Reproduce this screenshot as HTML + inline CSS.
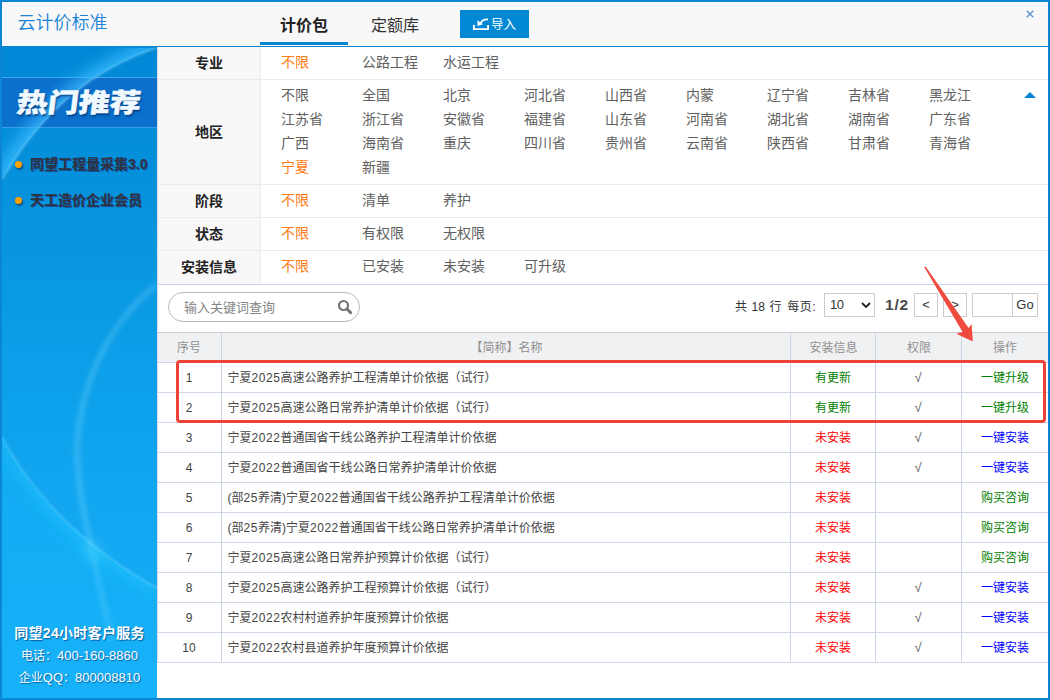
<!DOCTYPE html>
<html lang="zh-CN">
<head>
<meta charset="utf-8">
<title>云计价标准</title>
<style>
*{box-sizing:border-box;margin:0;padding:0}
html,body{width:1050px;height:700px;overflow:hidden;background:#fff}
body{font-family:"Liberation Sans","Noto Sans CJK SC",sans-serif;font-size:12px;color:#444;position:relative}
.abs{position:absolute}
#frame{position:absolute;left:0;top:0;width:1050px;height:700px;border:2px solid #0a86d4;border-top-width:2px;pointer-events:none;z-index:50}
#header{position:absolute;left:2px;top:2px;width:1046px;height:44px;background:#f8f8f9}
#hline{position:absolute;left:2px;top:46px;width:1046px;height:1px;background:#0a86d4}
#title{position:absolute;left:17.5px;top:9px;font-size:18px;line-height:28px;font-weight:350;color:#1a82d6;white-space:nowrap}
.tab{position:absolute;top:12px;font-size:16px;line-height:28px;white-space:nowrap;color:#333}
#tab1{left:280px;font-weight:700;color:#222}
#tab2{left:371px}
#tabline{position:absolute;left:260px;top:42px;width:88px;height:3px;background:#0a86d4}
#import{position:absolute;left:460px;top:10px;width:69px;height:28px;background:#0088d4;color:#fff;font-size:12.5px;line-height:28px;white-space:nowrap}
#import span{position:absolute;left:31px;top:1px}
#import svg{position:absolute;left:0;top:0}
#close{position:absolute;left:1026px;top:10px;width:8px;height:8px}
/* sidebar */
#side{position:absolute;left:2px;top:47px;width:155px;height:651px;background:linear-gradient(180deg,#0088d6 0%,#0894de 27%,#0c9ee8 47%,#12a6f0 67%,#17aef8 100%);overflow:hidden}
#banner{position:absolute;left:0;top:30px;width:155px;height:51px;background:#0a70cc;border-top:1px solid #3fa8ec;border-bottom:1px solid #2f9fe8}
#hot{position:absolute;left:15px;top:38px;font-size:26px;line-height:36px;font-weight:900;color:#f0f9ff;white-space:nowrap;transform-origin:0 50%;transform:scaleX(1.19) skewX(-6deg);-webkit-text-stroke:.5px #f0f9ff;text-shadow:1px 2px 2px rgba(0,40,100,.7)}
.sitem{position:absolute;left:28px;font-size:14px;font-weight:700;color:#30323f;line-height:20px;white-space:nowrap;text-shadow:1px 1px 0 rgba(20,40,120,.6)}
.dot{position:absolute;left:12.5px;width:7px;height:7px;border-radius:50%;background:#ffa200;box-shadow:1px 1.5px 2px rgba(0,30,80,.7)}
.svc{position:absolute;left:0;width:155px;text-align:center;color:#fff;white-space:nowrap;text-shadow:1px 1px 1px rgba(0,40,100,.6)}
/* filters */
.frow{position:absolute;left:157px;width:891px;border-bottom:1px solid #ebebeb;background:#fff}
.flabel{position:absolute;left:0;top:0;bottom:0;width:104px;padding-left:1px;background:#f8f8f8;border-right:1px solid #ebebeb;font-size:14px;font-weight:700;color:#222;text-align:center}
.fi{position:absolute;font-size:14px;line-height:24px;color:#606060;white-space:nowrap}
.fi.on{color:#ff7a12}
/* search */
#fbot{position:absolute;left:157px;top:284px;width:891px;height:1px;background:#c9d3e6}
#search{position:absolute;left:168px;top:292px;width:192px;height:30px;border:1px solid #b9b9b9;border-radius:15px;background:#fff}
#search span{position:absolute;left:15px;top:0;line-height:30px;font-size:13px;color:#858585;white-space:nowrap}
#search svg{position:absolute;left:168px;top:5.5px}
.pg{position:absolute;white-space:nowrap}
.pbtn{position:absolute;top:293px;height:24px;border:1px solid #ccc;background:#fff;text-align:center;line-height:22px;font-size:13px;color:#333}
/* table */
#thead{position:absolute;left:157px;top:332px;width:891px;height:31px;background:#f0f1f3;border-top:1px solid #c9cbd0;border-bottom:1px solid #d0d8e8}
.th{position:absolute;top:0;height:29px;line-height:31px;text-align:center;color:#909090;font-size:12px}
.vl{position:absolute;width:1px;background:#ccd4e6}
.tr{position:absolute;left:157px;width:891px;height:30px;border-bottom:1px solid #d0d8e8}
.td{position:absolute;top:0;height:29px;line-height:30px;font-size:12px;white-space:nowrap;color:#444}
.c1{left:0;width:64px;text-align:center}
.c2{left:70.5px}
.n{letter-spacing:.55px}
.c3{left:633.5px;width:85px;text-align:center}
.c4{left:718px;width:86px;text-align:center;color:#555;font-size:13px}
.c5{left:805px;width:86px;text-align:center}
.g{color:#008000}.r{color:#f00}.b{color:#00f}
#redbox{position:absolute;left:176px;top:360px;width:870px;height:63px;border:3px solid #ee4236;border-radius:4px}
</style>
</head>
<body>
<div id="header"></div>
<div id="hline"></div>
<div id="title">云计价标准</div>
<div class="tab" id="tab1">计价包</div>
<div class="tab" id="tab2">定额库</div>
<div id="tabline"></div>
<div id="import"><svg width="69" height="28" viewBox="0 0 69 28"><path d="M13.9 15V19.1H28.1V15" fill="none" stroke="#fff" stroke-width="1.9"/><path d="M28 9.3Q22.4 9 20.6 13.2" fill="none" stroke="#fff" stroke-width="1.8"/><path d="M17.4 10.3L23 14.3L17.5 16z" fill="#fff"/></svg><span>导入</span></div>
<svg id="close" viewBox="0 0 8 8"><path d="M0.7 0.7L7.3 7.3M7.3 0.7L0.7 7.3" stroke="#5b8fc9" stroke-width="1.3" fill="none"/></svg>

<div id="side">
  <div id="banner"></div>
  <svg class="abs" style="left:0;top:0" width="155" height="651" viewBox="2 47 155 651">
    <defs>
      <filter id="b6" x="-50%" y="-50%" width="200%" height="200%"><feGaussianBlur stdDeviation="7"/></filter>
      <filter id="b1" x="-50%" y="-50%" width="200%" height="200%"><feGaussianBlur stdDeviation="0.8"/></filter>
      <filter id="b2" x="-50%" y="-50%" width="200%" height="200%"><feGaussianBlur stdDeviation="2"/></filter>
      <filter id="b3" x="-50%" y="-50%" width="200%" height="200%"><feGaussianBlur stdDeviation="5"/></filter>
      <clipPath id="c1"><path d="M157 48Q60 80 2 180V47z"/></clipPath>
      <clipPath id="c2"><path d="M2 437C30 490 80 545 157 588V698H2z"/></clipPath>
    </defs>
    <g clip-path="url(#c1)"><path d="M157 48Q60 80 2 180" fill="none" stroke="#38bcff" stroke-opacity=".75" stroke-width="20" filter="url(#b6)"/></g>
    <path d="M157 48Q60 80 2 180" fill="none" stroke="#c8f0ff" stroke-opacity=".35" stroke-width="1.4" filter="url(#b1)"/>
    <path d="M157 284C100 330 78 400 77 450C78 500 90 540 112 640" fill="none" stroke="#7fdcff" stroke-opacity=".28" stroke-width="6" filter="url(#b2)"/>
    <g clip-path="url(#c2)"><path d="M2 437C30 490 80 545 157 588V698H2z" fill="#18c0ff" opacity=".22"/><path d="M2 437C30 490 80 545 157 588" fill="none" stroke="#20d0ff" stroke-opacity=".28" stroke-width="20" filter="url(#b6)"/></g>
    <path d="M2 437C30 490 80 545 157 588" fill="none" stroke="#b0f0ff" stroke-opacity=".35" stroke-width="1.6" filter="url(#b1)"/>
    <circle cx="93" cy="552" r="12" fill="#60e0ff" opacity=".22" filter="url(#b3)"/>
  </svg>
  <div id="hot">热门推荐</div>
  <div class="dot" style="top:114px"></div><div class="sitem" style="top:107px">同望工程量采集3.0</div>
  <div class="dot" style="top:150px"></div><div class="sitem" style="top:143px">天工造价企业会员</div>
  <div class="svc" style="top:575px;font-size:14px;font-weight:700;line-height:22px;letter-spacing:.3px">同望24小时客户服务</div>
  <div class="svc" style="top:599px;font-size:13px;line-height:20px"><span style="font-size:12px">电话：</span>400-160-8860</div>
  <div class="svc" style="top:621px;font-size:13px;line-height:20px"><span style="font-size:12px">企业</span>QQ<span style="font-size:12px">：</span>800008810</div>
</div>

<!-- filters -->
<div class="frow" style="top:47px;height:33px"><div class="flabel" style="line-height:32px">专业</div>
  <span class="fi on" style="left:124px;top:3px">不限</span><span class="fi" style="left:205px;top:3px">公路工程</span><span class="fi" style="left:286px;top:3px">水运工程</span></div>
<div class="frow" style="top:80px;height:105px"><div class="flabel" style="line-height:104px">地区</div>
  <span class="fi" style="left:124px;top:3px">不限</span><span class="fi" style="left:205px;top:3px">全国</span><span class="fi" style="left:286px;top:3px">北京</span><span class="fi" style="left:367px;top:3px">河北省</span><span class="fi" style="left:448px;top:3px">山西省</span><span class="fi" style="left:529px;top:3px">内蒙</span><span class="fi" style="left:610px;top:3px">辽宁省</span><span class="fi" style="left:691px;top:3px">吉林省</span><span class="fi" style="left:772px;top:3px">黑龙江</span>
  <span class="fi" style="left:124px;top:27px">江苏省</span><span class="fi" style="left:205px;top:27px">浙江省</span><span class="fi" style="left:286px;top:27px">安徽省</span><span class="fi" style="left:367px;top:27px">福建省</span><span class="fi" style="left:448px;top:27px">山东省</span><span class="fi" style="left:529px;top:27px">河南省</span><span class="fi" style="left:610px;top:27px">湖北省</span><span class="fi" style="left:691px;top:27px">湖南省</span><span class="fi" style="left:772px;top:27px">广东省</span>
  <span class="fi" style="left:124px;top:51px">广西</span><span class="fi" style="left:205px;top:51px">海南省</span><span class="fi" style="left:286px;top:51px">重庆</span><span class="fi" style="left:367px;top:51px">四川省</span><span class="fi" style="left:448px;top:51px">贵州省</span><span class="fi" style="left:529px;top:51px">云南省</span><span class="fi" style="left:610px;top:51px">陕西省</span><span class="fi" style="left:691px;top:51px">甘肃省</span><span class="fi" style="left:772px;top:51px">青海省</span>
  <span class="fi on" style="left:124px;top:75px">宁夏</span><span class="fi" style="left:205px;top:75px">新疆</span>
  <svg class="abs" style="left:867px;top:12px" width="12" height="6" viewBox="0 0 12 6"><path d="M0 6L6 0L12 6z" fill="#0a86d4"/></svg>
</div>
<div class="frow" style="top:185px;height:33px"><div class="flabel" style="line-height:32px">阶段</div>
  <span class="fi on" style="left:124px;top:3px">不限</span><span class="fi" style="left:205px;top:3px">清单</span><span class="fi" style="left:286px;top:3px">养护</span></div>
<div class="frow" style="top:218px;height:33px"><div class="flabel" style="line-height:32px">状态</div>
  <span class="fi on" style="left:124px;top:3px">不限</span><span class="fi" style="left:205px;top:3px">有权限</span><span class="fi" style="left:286px;top:3px">无权限</span></div>
<div class="frow" style="top:251px;height:33px;border-bottom:none"><div class="flabel" style="line-height:32px">安装信息</div>
  <span class="fi on" style="left:124px;top:3px">不限</span><span class="fi" style="left:205px;top:3px">已安装</span><span class="fi" style="left:286px;top:3px">未安装</span><span class="fi" style="left:367px;top:3px">可升级</span></div>
<div id="fbot"></div>

<!-- search + pager -->
<div id="search"><span>输入关键词查询</span><svg width="16" height="16" viewBox="0 0 16 16"><circle cx="6.5" cy="6.5" r="4.5" fill="none" stroke="#737373" stroke-width="2.2"/><path d="M10.2 10.2L13.6 13.6" stroke="#737373" stroke-width="3" stroke-linecap="round"/></svg></div>
<div class="pg" style="left:735px;top:297px;font-size:12px;line-height:20px;color:#333;word-spacing:1px;letter-spacing:.1px">共 18 行<span style="margin-left:5.5px;letter-spacing:.6px">每页:</span></div>
<div class="pbtn" style="left:824px;width:51px;text-align:left;padding-left:5px;font-size:13px;letter-spacing:-.6px">10<svg class="abs" style="left:36px;top:8px" width="10" height="7" viewBox="0 0 10 7"><path d="M1 1L5 5L9 1" fill="none" stroke="#222" stroke-width="1.8"/></svg></div>
<div class="pg" style="left:885px;top:295px;font-size:15.5px;font-weight:700;line-height:20px;color:#4a4a4a;letter-spacing:.8px">1/2</div>
<div class="pbtn" style="left:914px;width:24px">&lt;</div>
<div class="pbtn" style="left:943px;width:24px">&gt;</div>
<div class="pbtn" style="left:972px;width:41px"></div>
<div class="pbtn" style="left:1012px;width:26px">Go</div>

<!-- table -->
<div id="thead">
  <div class="th" style="left:0;width:64px">序号</div>
  <div class="th" style="left:65px;width:569px">【简称】名称</div>
  <div class="th" style="left:634px;width:85px">安装信息</div>
  <div class="th" style="left:719px;width:86px">权限</div>
  <div class="th" style="left:805px;width:86px">操作</div>
</div>
<div class="tr" style="top:363px"><div class="td c1">1</div><div class="td c2">宁夏<span class="n">2025</span>高速公路养护工程清单计价依据（试行）</div><div class="td c3 g">有更新</div><div class="td c4">√</div><div class="td c5 g">一键升级</div></div>
<div class="tr" style="top:393px"><div class="td c1">2</div><div class="td c2">宁夏<span class="n">2025</span>高速公路日常养护清单计价依据（试行）</div><div class="td c3 g">有更新</div><div class="td c4">√</div><div class="td c5 g">一键升级</div></div>
<div class="tr" style="top:423px"><div class="td c1">3</div><div class="td c2">宁夏<span class="n">2022</span>普通国省干线公路养护工程清单计价依据</div><div class="td c3 r">未安装</div><div class="td c4">√</div><div class="td c5 b">一键安装</div></div>
<div class="tr" style="top:453px"><div class="td c1">4</div><div class="td c2">宁夏<span class="n">2022</span>普通国省干线公路日常养护清单计价依据</div><div class="td c3 r">未安装</div><div class="td c4">√</div><div class="td c5 b">一键安装</div></div>
<div class="tr" style="top:483px"><div class="td c1">5</div><div class="td c2">(部<span class="n">25</span>养清)宁夏<span class="n">2022</span>普通国省干线公路养护工程清单计价依据</div><div class="td c3 r">未安装</div><div class="td c4"></div><div class="td c5 g">购买咨询</div></div>
<div class="tr" style="top:513px"><div class="td c1">6</div><div class="td c2">(部<span class="n">25</span>养清)宁夏<span class="n">2022</span>普通国省干线公路日常养护清单计价依据</div><div class="td c3 r">未安装</div><div class="td c4"></div><div class="td c5 g">购买咨询</div></div>
<div class="tr" style="top:543px"><div class="td c1">7</div><div class="td c2">宁夏<span class="n">2025</span>高速公路日常养护预算计价依据（试行）</div><div class="td c3 r">未安装</div><div class="td c4"></div><div class="td c5 g">购买咨询</div></div>
<div class="tr" style="top:573px"><div class="td c1">8</div><div class="td c2">宁夏<span class="n">2025</span>高速公路养护工程预算计价依据（试行）</div><div class="td c3 r">未安装</div><div class="td c4">√</div><div class="td c5 b">一键安装</div></div>
<div class="tr" style="top:603px"><div class="td c1">9</div><div class="td c2">宁夏<span class="n">2022</span>农村村道养护年度预算计价依据</div><div class="td c3 r">未安装</div><div class="td c4">√</div><div class="td c5 b">一键安装</div></div>
<div class="tr" style="top:633px"><div class="td c1">10</div><div class="td c2">宁夏<span class="n">2022</span>农村县道养护年度预算计价依据</div><div class="td c3 r">未安装</div><div class="td c4">√</div><div class="td c5 b">一键安装</div></div>
<div class="vl" style="left:157px;top:47px;height:616px;background:#d6dcea;z-index:3"></div>
<div class="vl" style="left:221px;top:333px;height:329px"></div>
<div class="vl" style="left:790px;top:333px;height:329px"></div>
<div class="vl" style="left:875px;top:333px;height:329px"></div>
<div class="vl" style="left:961px;top:333px;height:329px"></div>

<div id="redbox"></div>
<svg class="abs" style="left:900px;top:250px;z-index:20" width="100" height="100" viewBox="0 0 100 100"><path d="M24.3 17.2L25.6 16.4L68.6 78L71.6 74L72.8 91.5L56.3 83.7L62.6 82z" fill="#ee4a3e"/></svg>
<div id="frame"></div>
</body>
</html>
